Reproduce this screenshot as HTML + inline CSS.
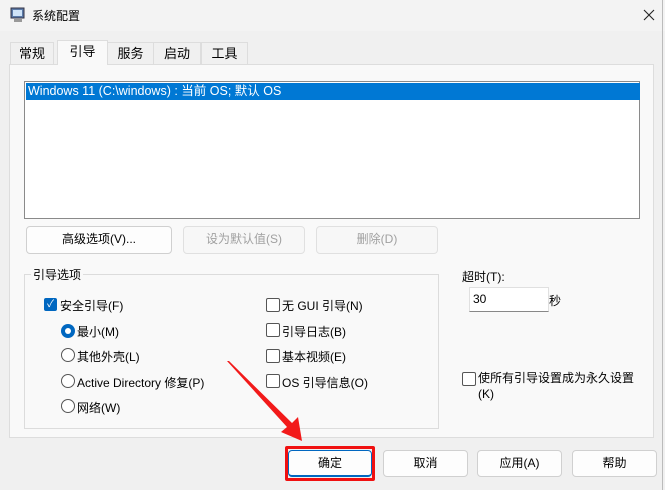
<!DOCTYPE html>
<html><head><meta charset="utf-8"><style>
body{margin:0;width:665px;height:490px;background:#f0f0f0;font-family:"Liberation Sans","Noto Sans CJK SC",sans-serif;font-size:12px;color:#000;position:relative;overflow:hidden}
.a{position:absolute}
.btn{position:absolute;background:#fdfdfd;border:1px solid #d0d0d0;border-radius:4px;box-sizing:border-box;text-align:center;line-height:25px}
.dis{color:#a0a0a0;background:#f7f7f7;border-color:#e0e0e0}
.cb{position:absolute;width:12px;height:12px;border:1px solid #555;border-radius:2px;background:#fff}
.rd{position:absolute;width:12px;height:12px;border:1px solid #555;border-radius:50%;background:#fff}
.tab{position:absolute;top:42px;height:22px;border:1px solid #ddd;border-bottom:none;background:#f0f0f0;line-height:22px;text-align:center;font-size:13px;box-sizing:border-box}
</style></head><body>
<div class="a" style="left:0;top:0;width:665px;height:31px;background:#f3f3f3"></div>
<div class="a" style="left:662px;top:0;width:1px;height:490px;background:#bbb"></div>
<svg class="a" style="left:10px;top:7px" width="16" height="16"><rect x="1" y="1" width="13" height="10" fill="#5b7aa8" stroke="#334"/><rect x="3" y="3" width="9" height="6" fill="#cfe3f7"/><rect x="4" y="12" width="8" height="3" fill="#999"/></svg>
<div class="a" style="left:32px;top:7px;font-size:12px">系统配置</div>
<svg class="a" style="left:643px;top:9px" width="12" height="12"><path d="M1 1L11 11M11 1L1 11" stroke="#222" stroke-width="1.1"/></svg>
<div class="tab" style="left:10px;width:44px">常规</div>
<div class="tab" style="left:57px;width:51px;top:40px;height:25px;background:#f9f9f9;z-index:2">引导</div>
<div class="tab" style="left:107px;width:47px">服务</div>
<div class="tab" style="left:153px;width:48px">启动</div>
<div class="tab" style="left:201px;width:47px">工具</div>
<div class="a" style="left:9px;top:64px;width:645px;height:374px;background:#f9f9f9;border:1px solid #ddd;box-sizing:border-box"></div>
<div class="a" style="left:24px;top:81px;width:616px;height:138px;background:#fff;border:1px solid #8a8a8a;box-sizing:border-box"></div>
<div class="a" style="left:26px;top:83px;width:612px;height:17px;background:#0078d4;color:#fff;line-height:17px;padding-left:2px;font-size:12.5px">Windows 11 (C:\windows) : 当前 OS; 默认 OS</div>
<div class="btn" style="left:26px;top:226px;width:146px;height:28px">高级选项(V)...</div>
<div class="btn dis" style="left:183px;top:226px;width:122px;height:28px">设为默认值(S)</div>
<div class="btn dis" style="left:316px;top:226px;width:122px;height:28px">删除(D)</div>
<div class="a" style="left:24px;top:274px;width:415px;height:155px;border:1px solid #dcdcdc;box-sizing:border-box"></div>
<div class="a" style="left:31px;top:266px;background:#f9f9f9;padding:0 2px">引导选项</div>
<div class="a" style="left:44px;top:298px;width:13px;height:13px;background:#0067c0;border-radius:2px;color:#fff;font-size:10px;line-height:13px;text-align:center">✓</div>
<div class="a" style="left:60px;top:297px">安全引导(F)</div>
<div class="a" style="left:61px;top:324px;width:14px;height:14px;border-radius:50%;background:#0067c0"><div class="a" style="left:4px;top:4px;width:6px;height:6px;border-radius:50%;background:#fff"></div></div>
<div class="a" style="left:77px;top:323px">最小(M)</div>
<div class="rd" style="left:61px;top:348px"></div><div class="a" style="left:77px;top:348px">其他外壳(L)</div>
<div class="rd" style="left:61px;top:374px"></div><div class="a" style="left:77px;top:374px">Active Directory 修复(P)</div>
<div class="rd" style="left:61px;top:399px"></div><div class="a" style="left:77px;top:399px">网络(W)</div>
<div class="cb" style="left:266px;top:298px"></div><div class="a" style="left:282px;top:297px">无 GUI 引导(N)</div>
<div class="cb" style="left:266px;top:323px"></div><div class="a" style="left:282px;top:323px">引导日志(B)</div>
<div class="cb" style="left:266px;top:349px"></div><div class="a" style="left:282px;top:348px">基本视频(E)</div>
<div class="cb" style="left:266px;top:374px"></div><div class="a" style="left:282px;top:374px">OS 引导信息(O)</div>
<div class="a" style="left:462px;top:268px">超时(T):</div>
<div class="a" style="left:469px;top:287px;width:80px;height:25px;background:#fff;border:1px solid #e0e0e0;border-bottom-color:#888;box-sizing:border-box;line-height:23px;padding-left:3px">30</div>
<div class="a" style="left:549px;top:292px">秒</div>
<div class="cb" style="left:462px;top:372px"></div>
<div class="a" style="left:478px;top:370px;line-height:16px">使所有引导设置成为永久设置<br>(K)</div>
<div class="btn" style="left:288px;top:450px;width:84px;height:27px;border-color:#0067c0;border-bottom-width:2px">确定</div>
<div class="a" style="left:285px;top:446px;width:90px;height:35px;border:3px solid #f01010;box-sizing:border-box;border-radius:2px"></div>
<div class="btn" style="left:383px;top:450px;width:85px;height:27px">取消</div>
<div class="btn" style="left:477px;top:450px;width:85px;height:27px">应用(A)</div>
<div class="btn" style="left:572px;top:450px;width:85px;height:27px">帮助</div>
<svg class="a" style="left:0;top:0" width="665" height="490"><polygon points="227,361 229,361 292,423 298,417 302,441 281,432 287,427" fill="#f21a1a"/></svg>
</body></html>
